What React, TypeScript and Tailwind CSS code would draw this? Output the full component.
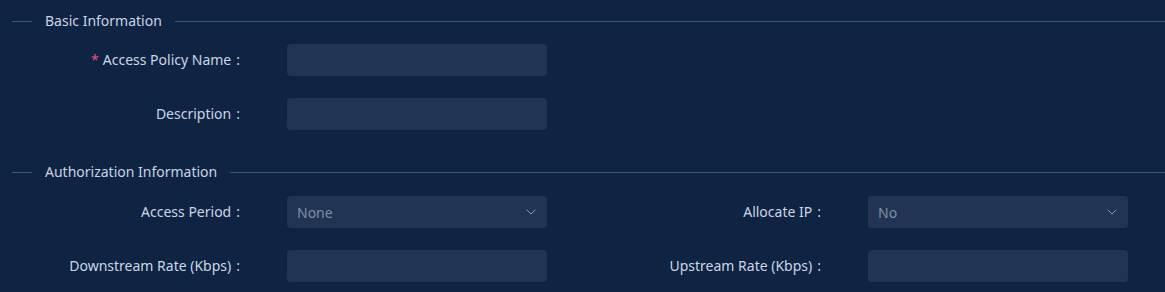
import { ChevronDown } from 'lucide-react';

const font = { fontFamily: '"Noto Sans", "Noto Sans CJK SC", sans-serif' };

function SectionTitle({ title }: { title: string }) {
  return (
    <div className="flex items-center h-[22px]">
      <div className="w-[20px] h-px bg-[#3a5680] ml-[12px]" />
      <span className="px-[13px] text-[14px] text-[#c9d4e4] leading-[22px]">{title}</span>
      <div className="flex-1 h-px bg-[#3a5680]" />
    </div>
  );
}

function Field({ label, required, select, value }: { label: string; required?: boolean; select?: boolean; value?: string }) {
  return (
    <div className="flex items-center w-[581px]">
      <label className="w-[243px] pr-[3px] flex justify-end items-center text-[14px] text-[#cbd6e6] leading-[32px] whitespace-nowrap">
        {required && <span className="text-[#e2546c] mr-[4px]">*</span>}
        <span>{label}</span>
        <span className="ml-[5px]">:</span>
      </label>
      <div className="ml-[44px] w-[260px] h-[32px] rounded-[4px] bg-[#213453] flex items-center justify-between pl-[10px] pr-[8px]">
        <span className="text-[14px] text-[#7e8ea8]">{value}</span>
        {select && <ChevronDown size={16} strokeWidth={1.5} className="text-[#8797b1]" />}
      </div>
    </div>
  );
}

export default function App() {
  return (
    <div className="w-[1165px] h-[292px] bg-[#0f2342] pt-[10px] overflow-hidden" style={font}>
      <SectionTitle title="Basic Information" />
      <div className="flex flex-col gap-[22px] mt-[12px]">
        <Field label="Access Policy Name" required />
        <Field label="Description" />
      </div>

      <div className="mt-[31px]">
        <SectionTitle title="Authorization Information" />
      </div>
      <div className="flex flex-col gap-[22px] mt-[13px]">
        <div className="flex">
          <Field label="Access Period" select value="None" />
          <Field label="Allocate IP" select value="No" />
        </div>
        <div className="flex">
          <Field label="Downstream Rate (Kbps)" />
          <Field label="Upstream Rate (Kbps)" />
        </div>
      </div>
    </div>
  );
}
